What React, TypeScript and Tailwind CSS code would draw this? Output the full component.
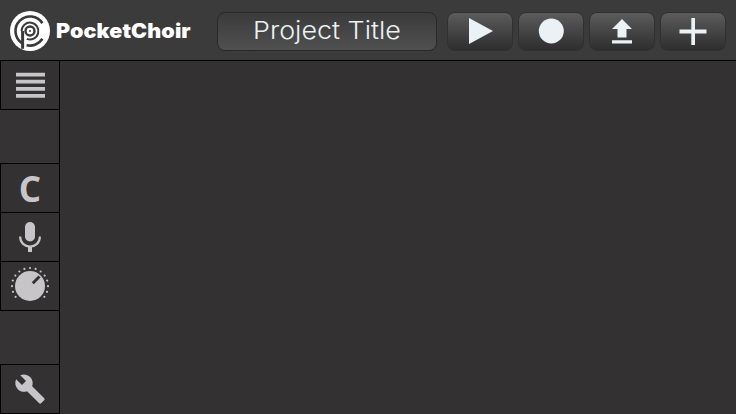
import type { ReactNode } from "react";

function Logo() {
  return (
    <svg viewBox="0 0 40 40" className="h-10 w-10 shrink-0" fill="none">
      <circle cx="20" cy="20" r="20" fill="#fff" />
      <g stroke="#3a3a3a" strokeWidth="2.6">
        <path d="M32.4 12.2A14.6 14.6 0 1 0 12 32.2" />
        <path d="M16.6 34.2A14.6 14.6 0 0 0 32.4 27.8" />
        <path d="M12.6 37.8V20" strokeWidth="3" />
        <path d="M11.6 20A8.4 8.4 0 1 1 16.8 27.8" strokeWidth="2" />
        <circle cx="20" cy="20" r="4.5" strokeWidth="2.4" />
      </g>
      <circle cx="20" cy="20" r="1" fill="#3a3a3a" />
    </svg>
  );
}

function ToolButton({ label, children }: { label: string; children: ReactNode }) {
  return (
    <button
      aria-label={label}
      className="flex h-[39px] w-[66px] items-center justify-center rounded-lg border border-[#303030] bg-linear-to-b from-[#5c5c5c] to-[#2e2e2e] text-[#ebf2f5]"
    >
      {children}
    </button>
  );
}

function SideButton({ label, children }: { label: string; children: ReactNode }) {
  return (
    <button
      aria-label={label}
      className="-mb-px flex h-[50px] w-[60px] shrink-0 items-center justify-center border border-black bg-[#333132] text-[#c8c5c9]"
    >
      {children}
    </button>
  );
}

const dots = Array.from({ length: 15 }, (_, i) => {
  const a = ((-127 + (i * 254) / 14) * Math.PI) / 180;
  return { x: 20 + 18 * Math.sin(a), y: 20 - 18 * Math.cos(a) };
});

export default function App() {
  return (
    <div className="flex h-[414px] w-[736px] flex-col overflow-hidden bg-[#333132]">
      <header className="flex h-[60px] shrink-0 items-center bg-[#3b3b3b] pt-0.5 pl-2.5">
        <Logo />
        <div className="ml-1.5 w-[161px]">
          <span className="inline-block origin-left scale-x-[1.075] font-['Inter',sans-serif] text-[20px] leading-6 font-black tracking-[0.1px] whitespace-nowrap text-white">
            PocketChoir
          </span>
        </div>
        <div className="flex h-[39px] w-[220px] items-center justify-center rounded-lg border border-[#292929] bg-linear-to-b from-[#3b3b3b] to-[#505050] font-['Inter',sans-serif] text-[24px] font-light text-[#ebf2f5]">
          <span className="inline-block scale-x-[1.12] whitespace-nowrap">Project Title</span>
        </div>
        <div className="ml-2.5 flex gap-[5px]">
          <ToolButton label="Play">
            <svg viewBox="0 0 24 26" className="ml-0.5 h-[26px] w-6" fill="currentColor">
              <path d="M0 0L24 13L0 26Z" />
            </svg>
          </ToolButton>
          <ToolButton label="Record">
            <svg viewBox="0 0 26 26" className="size-[26px]" fill="currentColor">
              <circle cx="13.3" cy="13" r="12.5" />
            </svg>
          </ToolButton>
          <ToolButton label="Upload">
            <svg viewBox="0 0 20 25" className="h-[25px] w-5" fill="currentColor">
              <path d="M10 0L20 10H14.5V18.5H5.5V10H0ZM0 21.3H20V24.5H0Z" />
            </svg>
          </ToolButton>
          <ToolButton label="Add">
            <svg viewBox="0 0 28 27" className="h-[27px] w-7" fill="currentColor">
              <path d="M12.3 0H16V11.5H27.5V15.5H16V27H12.3V15.5H.5V11.5H12.3Z" />
            </svg>
          </ToolButton>
        </div>
      </header>
      <div className="flex h-[354px]">
        <nav className="flex w-[60px] flex-col justify-between border-r border-black bg-[#353333]">
          <SideButton label="Menu">
            <svg viewBox="0 0 29 26" className="h-[26px] w-[29px]" fill="currentColor">
              <path d="M0 .8H29V4.6H0ZM0 7.8H29V11.6H0ZM0 14.9H29V18.7H0ZM0 22H29V25.8H0Z" />
            </svg>
          </SideButton>
          <div className="flex flex-col">
            <SideButton label="Key">
              <span className="font-['Open_Sans',sans-serif] text-[35px] leading-none font-bold">C</span>
            </SideButton>
            <SideButton label="Microphone">
              <svg viewBox="0 0 22 31" className="h-[31px] w-[22px]" fill="none" stroke="currentColor">
                <rect x="6" y="0" width="10" height="19.5" rx="5" fill="currentColor" stroke="none" />
                <path d="M1.2 14.5v.8a9.8 9.3 0 0 0 19.6 0V14.5" strokeWidth="2.2" />
                <path d="M11 24V30" strokeWidth="4" />
              </svg>
            </SideButton>
            <SideButton label="Dial">
              <svg viewBox="0 0 40 40" className="size-10 shrink-0" fill="currentColor">
                <circle cx="20" cy="20" r="15" />
                <path d="M22.8 17.2L29.5 10.5" stroke="#333132" strokeWidth="3" />
                {dots.map((d, i) => (
                  <circle key={i} cx={d.x} cy={d.y} r="1.1" />
                ))}
              </svg>
            </SideButton>
          </div>
          <div className="pb-px">
            <SideButton label="Settings">
              <svg viewBox="0 0 24 24" className="size-8" fill="currentColor">
                <path d="M22.7 19l-9.1-9.1c.9-2.3.4-5-1.5-6.9-2-2-5-2.4-7.4-1.3L9 6 6 9 1.6 4.7C.4 7.1.9 10.1 2.9 12.1c1.9 1.9 4.6 2.4 6.9 1.5l9.1 9.1c.4.4 1 .4 1.4 0l2.3-2.3c.5-.4.5-1.1.1-1.4z" />
              </svg>
            </SideButton>
          </div>
        </nav>
        <main className="flex-1 border-t border-black bg-[#333132]" />
      </div>
    </div>
  );
}
